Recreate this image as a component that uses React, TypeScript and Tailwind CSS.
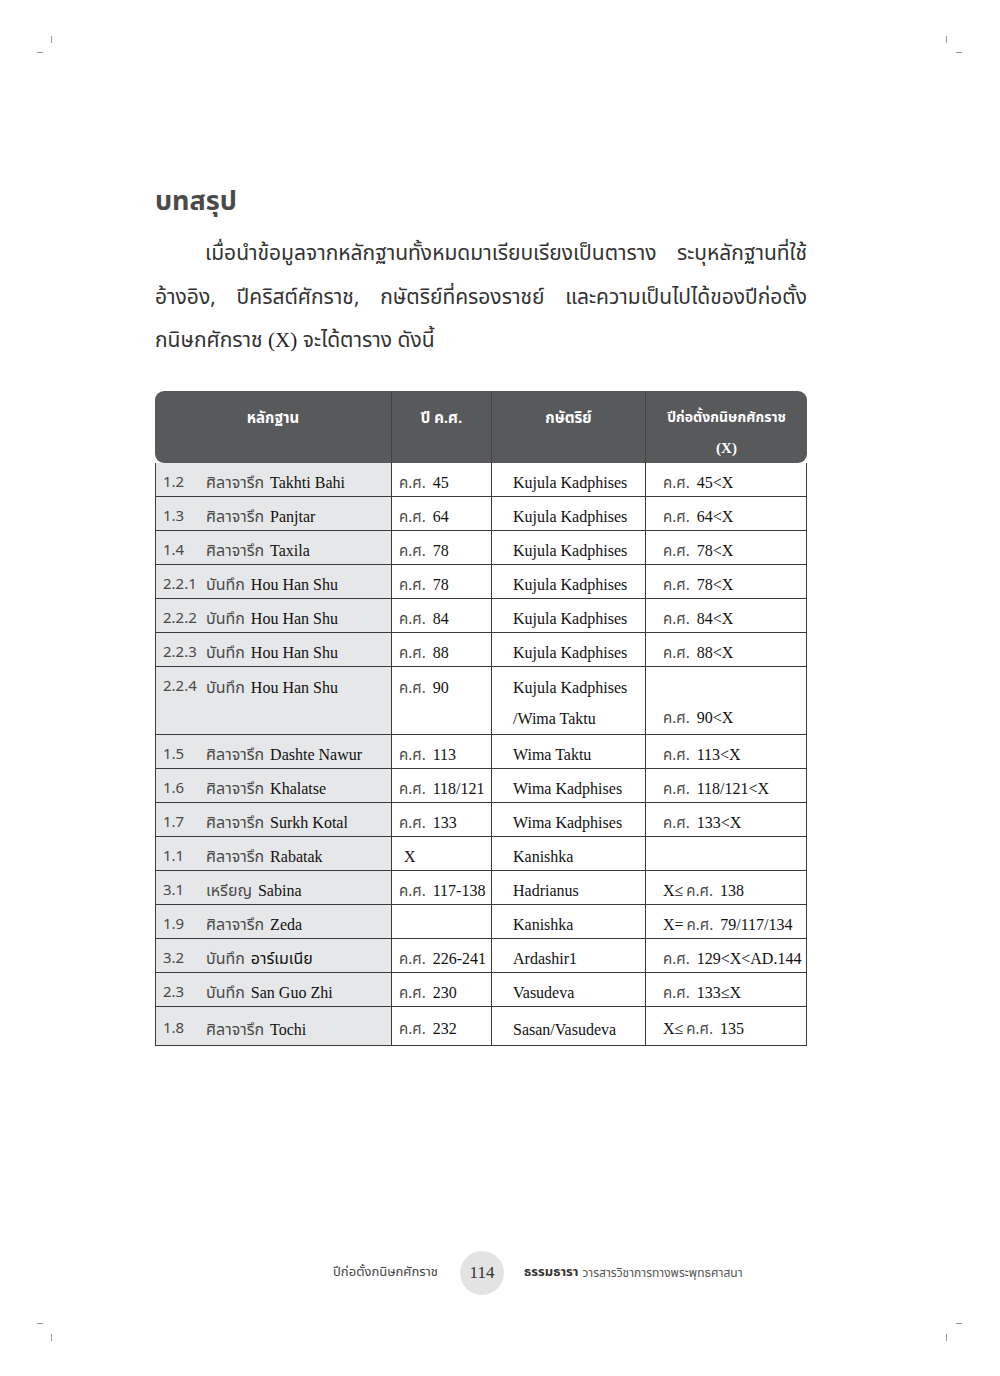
import React from "react";

type Row = {
  no: string;
  kind: string;
  name: string;
  year: string;
  king: string;
  x: string;
};

const rows: Row[] = [
  { no: "1.2", kind: "ศิลาจารึก", name: "Takhti Bahi", year: "45", king: "Kujula Kadphises", x: "ค.ศ.|45<X" },
  { no: "1.3", kind: "ศิลาจารึก", name: "Panjtar", year: "64", king: "Kujula Kadphises", x: "ค.ศ.|64<X" },
  { no: "1.4", kind: "ศิลาจารึก", name: "Taxila", year: "78", king: "Kujula Kadphises", x: "ค.ศ.|78<X" },
  { no: "2.2.1", kind: "บันทึก", name: "Hou Han Shu", year: "78", king: "Kujula Kadphises", x: "ค.ศ.|78<X" },
  { no: "2.2.2", kind: "บันทึก", name: "Hou Han Shu", year: "84", king: "Kujula Kadphises", x: "ค.ศ.|84<X" },
  { no: "2.2.3", kind: "บันทึก", name: "Hou Han Shu", year: "88", king: "Kujula Kadphises", x: "ค.ศ.|88<X" },
];

const rowsAfter: Row[] = [
  { no: "1.5", kind: "ศิลาจารึก", name: "Dashte Nawur", year: "113", king: "Wima Taktu", x: "ค.ศ.|113<X" },
  { no: "1.6", kind: "ศิลาจารึก", name: "Khalatse", year: "118/121", king: "Wima Kadphises", x: "ค.ศ.|118/121<X" },
  { no: "1.7", kind: "ศิลาจารึก", name: "Surkh Kotal", year: "133", king: "Wima Kadphises", x: "ค.ศ.|133<X" },
  { no: "1.1", kind: "ศิลาจารึก", name: "Rabatak", year: "X", king: "Kanishka", x: "" },
  { no: "3.1", kind: "เหรียญ", name: "Sabina", year: "117-138", king: "Hadrianus", x: "X≤|ค.ศ.|138" },
  { no: "1.9", kind: "ศิลาจารึก", name: "Zeda", year: "", king: "Kanishka", x: "X=|ค.ศ.|79/117/134" },
  { no: "3.2", kind: "บันทึก", name: "อาร์เมเนีย", year: "226-241", king: "Ardashir1", x: "ค.ศ.|129<X<AD.144" },
  { no: "2.3", kind: "บันทึก", name: "San Guo Zhi", year: "230", king: "Vasudeva", x: "ค.ศ.|133≤X" },
  { no: "1.8", kind: "ศิลาจารึก", name: "Tochi", year: "232", king: "Sasan/Vasudeva", x: "X≤|ค.ศ.|135" },
];

const serif = "font-['Liberation_Serif','Noto_Sans_Thai','Noto_Sans_Thai_Looped',serif]";
const thai = "font-['Noto_Sans_Thai','Noto_Sans_Thai_Looped','DejaVu_Sans',sans-serif] text-[#4a4a4a]";
const headCell = "font-['Noto_Sans_Thai','Noto_Sans_Thai_Looped','DejaVu_Sans',sans-serif] text-white font-bold text-center";

// ค.ศ. pieces are set in the thin Thai face, numbers in serif
function XCell({ v }: { v: string }) {
  if (!v) return null;
  const parts = v.split("|");
  return (
    <span>
      {parts.map((p, i) => (
        <span key={i} className={p === "ค.ศ." ? thai + " text-[15px] mr-[7px]" : "mr-[3px]"}>
          {p}
        </span>
      ))}
    </span>
  );
}

function YearCell({ y }: { y: string }) {
  if (!y) return null;
  if (y === "X") return <span className="pl-[5px]">X</span>;
  return (
    <span>
      <span className={thai + " text-[15px] mr-[7px]"}>ค.ศ.</span>
      {y}
    </span>
  );
}

function Evidence({ r }: { r: Row }) {
  return (
    <>
      <span className={thai + " text-[15px] w-[43px] shrink-0"}>{r.no}</span>
      <span className={thai + " text-[16px] mr-[6px]"}>{r.kind}</span>
      <span>{r.name}</span>
    </>
  );
}

function TableRow({ r, last }: { r: Row; last?: boolean }) {
  const h = last ? "h-[39px]" : "h-[34px]";
  return (
    <div className={`grid grid-cols-[236px_100px_154px_162px] border-b border-[#3a3a3a] ${h}`}>
      <div className="flex items-center bg-[#e6e7e8] border-r border-[#3a3a3a] pl-[7px] pt-[7px]">
        <Evidence r={r} />
      </div>
      <div className="flex items-center border-r border-[#3a3a3a] pl-[7px] pt-[7px]">
        <YearCell y={r.year} />
      </div>
      <div className="flex items-center border-r border-[#3a3a3a] pl-[21px] pt-[7px]">{r.king}</div>
      <div className="flex items-center pl-[17px] pt-[7px]">
        <XCell v={r.x} />
      </div>
    </div>
  );
}

function CropMarks() {
  return (
    <>
      <div className="absolute left-[51px] top-[36px] h-[7px] w-px bg-[#999]" />
      <div className="absolute left-[37px] top-[52px] h-px w-[6px] bg-[#999]" />
      <div className="absolute left-[946px] top-[36px] h-[7px] w-px bg-[#999]" />
      <div className="absolute left-[956px] top-[52px] h-px w-[6px] bg-[#999]" />
      <div className="absolute left-[37px] top-[1323px] h-px w-[6px] bg-[#999]" />
      <div className="absolute left-[51px] top-[1334px] h-[7px] w-px bg-[#999]" />
      <div className="absolute left-[956px] top-[1323px] h-px w-[6px] bg-[#999]" />
      <div className="absolute left-[946px] top-[1334px] h-[7px] w-px bg-[#999]" />
    </>
  );
}

export default function App() {
  return (
    <div className="relative w-[1000px] h-[1376px] bg-white text-[#222] overflow-hidden">
      <CropMarks />

      <div className="w-[652px] ml-[155px] pt-[178px]">
        <h1 className={thai + " text-[27px] font-bold text-[#2a2a2a] leading-[48px]"}>บทสรุป</h1>

        <div className={thai + " text-[21px] leading-[42px] text-[#333] mt-[7px] whitespace-nowrap"}>
          <div className="flex justify-between pl-[50px]">
            <span>เมื่อนำข้อมูลจากหลักฐานทั้งหมดมาเรียบเรียงเป็นตาราง</span>
            <span>ระบุหลักฐานที่ใช้</span>
          </div>
          <div className="flex justify-between mt-[2px]">
            <span>อ้างอิง,</span>
            <span>ปีคริสต์ศักราช,</span>
            <span>กษัตริย์ที่ครองราชย์</span>
            <span>และความเป็นไปได้ของปีก่อตั้ง</span>
          </div>
          <div>
            กนิษกศักราช <span className={serif + " text-[#222]"}>(X)</span> จะได้ตาราง ดังนี้
          </div>
        </div>

        <div className={serif + " mt-[29px] text-[16px] text-[#111]"}>
          <div className="grid grid-cols-[236px_100px_154px_162px] h-[72px] rounded-[9px] bg-[#58595b]">
            <div className={headCell + " text-[15px] pt-[17px]"}>หลักฐาน</div>
            <div className={headCell + " text-[15px] pt-[17px] border-l border-[#444]"}>ปี ค.ศ.</div>
            <div className={headCell + " text-[15px] pt-[17px] border-l border-[#444]"}>กษัตริย์</div>
            <div className={headCell + " text-[14px] pt-[17px] border-l border-[#444]"}>
              <div className="leading-[20px]">ปีก่อตั้งกนิษกศักราช</div>
              <div className={serif + " mt-[10px] leading-[20px] text-[15px]"}>(X)</div>
            </div>
          </div>

          <div className="border-l border-r border-[#3a3a3a]">
            {rows.map((r) => (
              <TableRow key={r.no} r={r} />
            ))}

            <div className="grid grid-cols-[236px_100px_154px_162px] border-b border-[#3a3a3a] h-[68px]">
              <div className="flex items-start bg-[#e6e7e8] border-r border-[#3a3a3a] pl-[7px] pt-[9px]">
                <Evidence r={{ no: "2.2.4", kind: "บันทึก", name: "Hou Han Shu", year: "90", king: "", x: "" }} />
              </div>
              <div className="border-r border-[#3a3a3a] pl-[7px] pt-[9px]">
                <YearCell y="90" />
              </div>
              <div className="flex flex-col justify-around border-r border-[#3a3a3a] pl-[21px] pt-[6px]">
                <div>Kujula Kadphises</div>
                <div>/Wima Taktu</div>
              </div>
              <div className="flex items-end pl-[17px] pb-[4px]">
                <XCell v="ค.ศ.|90<X" />
              </div>
            </div>

            {rowsAfter.map((r, i) => (
              <TableRow key={r.no} r={r} last={i === rowsAfter.length - 1} />
            ))}
          </div>
        </div>
      </div>

      <div className="absolute left-0 right-0 top-[1251px] flex items-center">
        <div className="w-[333px]" />
        <span className={thai + " text-[13px] text-[#444]"}>ปีก่อตั้งกนิษกศักราช</span>
        <div className={serif + " ml-[22px] w-[44px] h-[44px] rounded-full bg-[#e3e3e3] flex items-center justify-center text-[17px] text-[#333]"}>
          114
        </div>
        <span className={thai + " ml-[20px] text-[13px] font-bold text-[#333]"}>ธรรมธารา</span>
        <span className={thai + " ml-[4px] text-[12px] text-[#555]"}>วารสารวิชาการทางพระพุทธศาสนา</span>
      </div>
    </div>
  );
}
